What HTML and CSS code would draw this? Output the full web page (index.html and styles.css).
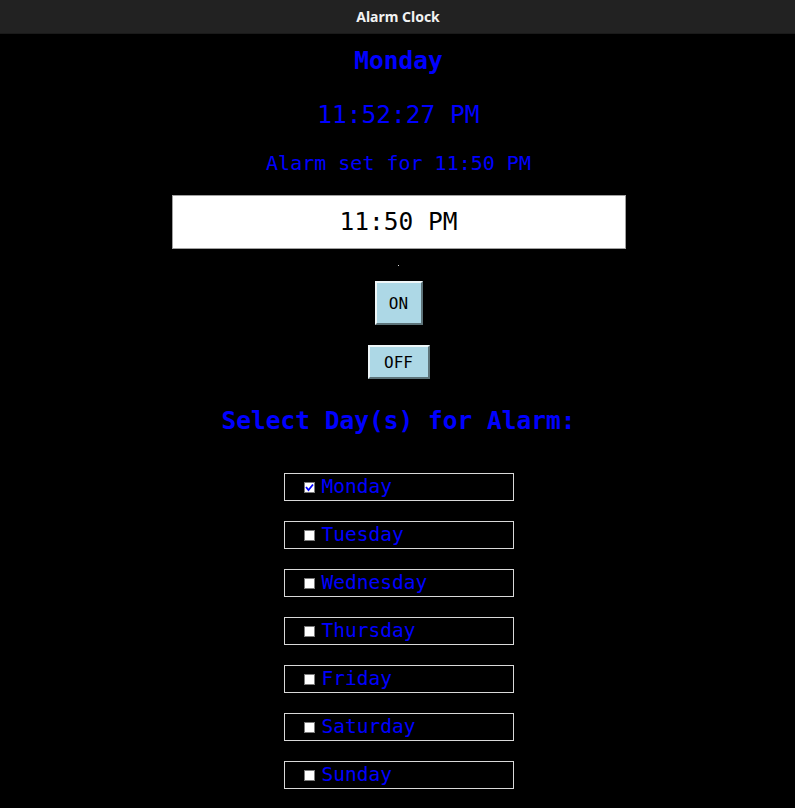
FILE: index.html
```html
<!DOCTYPE html>
<html>
<head>
<meta charset="utf-8">
<title>Alarm Clock</title>
<link rel="stylesheet" href="styles.css">
</head>
<body>
<div class="titlebar">Alarm Clock</div>
<main class="app">
  <div class="day">Monday</div>
  <div class="time">11:52:27 PM</div>
  <div class="alarm-info">Alarm set for 11:50 PM</div>
  <div class="entry">11:50 PM</div>
  <div class="dot"></div>
  <button class="btn btn-on">ON</button>
  <button class="btn btn-off">OFF</button>
  <div class="select-title">Select Day(s) for Alarm:</div>
  <ul class="days">
    <li class="day-row"><span class="check checked"><svg viewBox="0 0 9 9" width="9" height="9"><path d="M1 4 L3.5 7 L8 1.5" fill="none" stroke="#0000ff" stroke-width="1.8"/></svg></span><span class="day-name">Monday</span></li>
    <li class="day-row"><span class="check"></span><span class="day-name">Tuesday</span></li>
    <li class="day-row"><span class="check"></span><span class="day-name">Wednesday</span></li>
    <li class="day-row"><span class="check"></span><span class="day-name">Thursday</span></li>
    <li class="day-row"><span class="check"></span><span class="day-name">Friday</span></li>
    <li class="day-row"><span class="check"></span><span class="day-name">Saturday</span></li>
    <li class="day-row"><span class="check"></span><span class="day-name">Sunday</span></li>
  </ul>
</main>
</body>
</html>
```
FILE: styles.css
```css
html, body {
  margin: 0;
  padding: 0;
  background: #000;
  height: 100%;
  overflow: hidden;
}
.titlebar {
  height: 34px;
  background: #222222;
  color: #f2f2f2;
  font-family: "Noto Sans", "DejaVu Sans", sans-serif;
  font-weight: 700;
  font-size: 14px;
  line-height: 33px;
  text-align: center;
  padding-left: 1px;
  border-bottom: 1px solid #1a1a1a;
  box-sizing: border-box;
}
.app {
  display: flex;
  flex-direction: column;
  align-items: center;
  padding-left: 2px;
  font-family: "DejaVu Sans Mono", "Liberation Mono", monospace;
  color: #0000ff;
}
.day {
  margin-top: 7px;
  font-size: 24.5px;
  font-weight: 700;
  line-height: 40px;
  height: 40px;
}
.time {
  margin-top: 14px;
  font-size: 24.5px;
  line-height: 40px;
  height: 40px;
}
.alarm-info {
  margin-top: 13px;
  font-size: 20px;
  line-height: 30px;
  height: 30px;
}
.entry {
  margin-top: 17px;
  width: 454px;
  height: 54px;
  box-sizing: border-box;
  background: #fff;
  border: 1px solid #a0a0a0;
  color: #000;
  font-size: 24.5px;
  line-height: 52px;
  text-align: center;
}
.dot {
  margin-top: 16px;
  width: 1px;
  height: 1px;
  background: #dddddd;
}
.btn {
  font-family: "DejaVu Sans Mono", "Liberation Mono", monospace;
  font-size: 16px;
  color: #000;
  background: #add8e6;
  border: 2px solid;
  border-color: #eef6f8 #5d7379 #5d7379 #eef6f8;
  padding: 0;
  margin: 0;
  box-sizing: border-box;
}
.btn-on {
  margin-top: 15px;
  width: 48px;
  height: 44px;
}
.btn-off {
  margin-top: 20px;
  width: 62px;
  height: 34px;
}
.select-title {
  margin-top: 25px;
  font-size: 24.5px;
  font-weight: 700;
  line-height: 34px;
  height: 34px;
}
.days {
  list-style: none;
  margin: 35px 0 0 0;
  padding: 0;
  display: flex;
  flex-direction: column;
  gap: 20px;
}
.day-row {
  width: 230px;
  height: 28px;
  box-sizing: border-box;
  border: 1px solid #d9d9d9;
  display: flex;
  align-items: center;
  padding-left: 19px;
}
.check {
  width: 11px;
  height: 11px;
  box-sizing: border-box;
  background: #fff;
  border: 1px solid #7a7a7a;
  display: flex;
  align-items: center;
  justify-content: center;
  margin-right: 7px;
}
.check svg {
  display: block;
}
.day-name {
  font-size: 19.5px;
  line-height: 26px;
  color: #0000ff;
}
```
